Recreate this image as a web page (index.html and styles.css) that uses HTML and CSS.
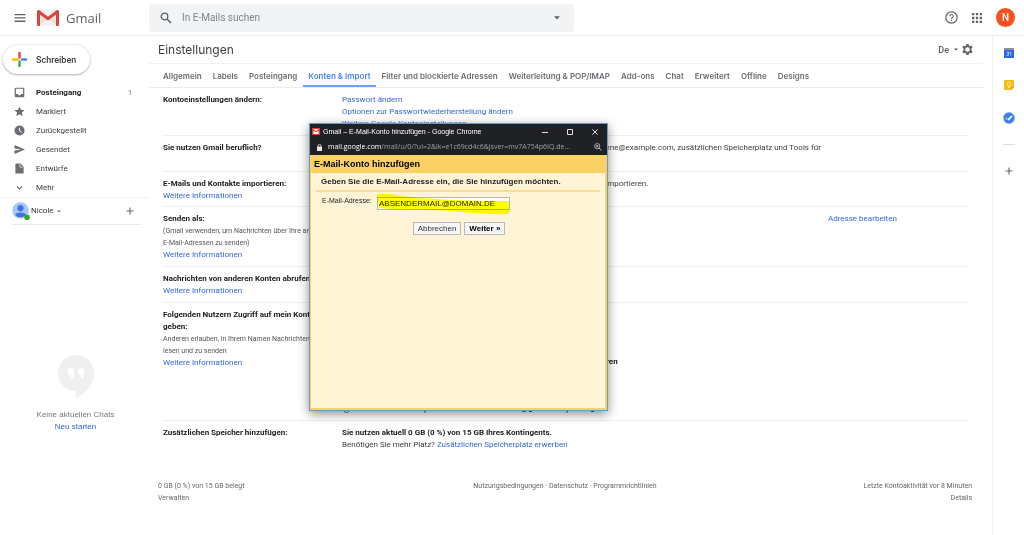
FILE: index.html
```html
<!DOCTYPE html>
<html lang="de">
<head>
<meta charset="utf-8">
<title>Gmail – Einstellungen</title>
<link rel="stylesheet" href="styles.css">
</head>
<body>
<header class="topbar">
  <div class="brand">
    <button class="icon-btn" aria-label="Hauptmenü"><svg width="12" height="12" viewBox="0 0 12 12"><path d="M0.5 2h11v1.3h-11zM0.5 5.3h11v1.3h-11zM0.5 8.6h11v1.3h-11z" fill="#5f6368"/></svg></button>
    <svg class="logo" width="22" height="16" viewBox="0 0 22 16"><path d="M1.500 0h19A1.500 1.500 0 0 1 22 1.500V14.500A1.500 1.500 0 0 1 20.500 16H1.500A1.500 1.500 0 0 1 0 14.500V1.500Z" fill="#e3e3e3"/><path d="M2 16L11 8.500L20 16Z" fill="#f2f2f2"/><path d="M3 .5h16L11 7z" fill="#f5f5f5"/><path d="M0 1.600V14.500A1.500 1.500 0 0 0 1.500 16H3V4.500L11 10.400L19 4.500V16h1.500A1.500 1.500 0 0 0 22 14.500V1.600C22 .2 20.500-.4 19.400.4L11 6.800L2.600.4C1.500-.4 0 .2 0 1.600Z" fill="#d8453a"/></svg>
    <span class="brand-name">Gmail</span>
  </div>
  <form class="search">
    <button type="button" class="icon-btn" aria-label="Suchen"><svg width="12" height="12" viewBox="0 0 12 12"><circle cx="4.500" cy="4.500" r="3.300" fill="none" stroke="#5f6368" stroke-width="1.300"/><path d="M7 7l4 4" stroke="#5f6368" stroke-width="1.600"/></svg></button>
    <input type="text" aria-label="In E-Mails suchen" placeholder="In E-Mails suchen">
    <button type="button" class="icon-btn" aria-label="Suchoptionen"><svg width="6" height="4" viewBox="0 0 6 4"><path d="M0 .3h6L3 3.500z" fill="#5f6368"/></svg></button>
  </form>
  <div class="account">
    <button class="icon-btn" aria-label="Hilfe"><svg width="13" height="13" viewBox="0 0 24 24"><circle cx="12" cy="12" r="10.400" fill="none" stroke="#5f6368" stroke-width="2.200"/><path d="M8.800 9.800c0-4.300 6.400-4.300 6.400-.2 0 2.300-3.200 2.400-3.200 5" fill="none" stroke="#5f6368" stroke-width="2"/><path d="M11 16.300h2v2.200h-2z" fill="#5f6368"/></svg></button>
    <button class="icon-btn" aria-label="Apps"><svg width="10" height="10" viewBox="0 0 10 10" fill="#5f6368"><path d="M0 0h2.300v2.300H0zM3.850 0h2.300v2.300h-2.300zM7.700 0H10v2.300H7.700zM0 3.850h2.300v2.300H0zM3.850 3.850h2.300v2.300h-2.300zM7.700 3.850H10v2.300H7.700zM0 7.700h2.300V10H0zM3.850 7.700h2.300V10h-2.300zM7.700 7.700H10V10H7.700z"/></svg></button>
    <button class="avatar" aria-label="Google-Konto">N</button>
  </div>
</header>

<div class="layout">
  <aside class="sidebar">
    <button class="compose"><svg width="15" height="15" viewBox="0 0 15 15"><path d="M6.300 0h2.400v6.300H6.300z" fill="#ea4335"/><path d="M8.700 6.300H15v2.400H8.700z" fill="#4285f4"/><path d="M6.300 8.700h2.400V15H6.300z" fill="#34a853"/><path d="M0 6.300h8.700L6.300 8.700H0z" fill="#fbbc04"/></svg>Schreiben</button>
    <nav class="folders">
      <a href="#" class="folder current"><svg width="11" height="11" viewBox="0 0 24 24"><path d="M4 1.500h16A2.500 2.500 0 0 1 22.500 4v16a2.500 2.500 0 0 1-2.500 2.500H4A2.500 2.500 0 0 1 1.500 20V4A2.500 2.500 0 0 1 4 1.500zM4.200 4v11.500h4.300c.5 4 6.500 4 7 0h4.300V4z" fill="#6b6e72" fill-rule="evenodd"/></svg><span>Posteingang</span><span class="count">1</span></a>
      <a href="#" class="folder"><svg width="11" height="11" viewBox="0 0 24 24"><path d="M12 1l3.200 7.400 8 .7-6 5.300 1.800 7.900-7-4.200-7 4.200 1.800-7.900-6-5.300 8-.7z" fill="#6b6e72"/></svg><span>Markiert</span></a>
      <a href="#" class="folder"><svg width="11" height="11" viewBox="0 0 24 24"><circle cx="12" cy="12" r="11" fill="#6b6e72"/><path d="M12 6v7l5 3" fill="none" stroke="#fff" stroke-width="2"/></svg><span>Zurückgestellt</span></a>
      <a href="#" class="folder"><svg width="11" height="11" viewBox="0 0 24 24"><path d="M1 2l23 10L1 22v-8l15-2L1 10z" fill="#6b6e72"/></svg><span>Gesendet</span></a>
      <a href="#" class="folder"><svg width="11" height="11" viewBox="0 0 24 24"><path d="M5 1h9l7 7v13a2 2 0 0 1-2 2H5a2 2 0 0 1-2-2V3a2 2 0 0 1 2-2z" fill="#6b6e72"/><path d="M13 3v6h6" fill="none" stroke="#fff" stroke-width="1.500"/></svg><span>Entwürfe</span></a>
      <a href="#" class="folder"><svg width="11" height="11" viewBox="0 0 11 11"><path d="M2.800 4.300l2.700 2.700 2.700-2.700" fill="none" stroke="#6b6e72" stroke-width="1.100"/></svg><span>Mehr</span></a>
    </nav>
    <div class="chat-user">
      <svg width="18" height="18" viewBox="0 0 18 18"><circle cx="8.500" cy="8.500" r="8.200" fill="#a6c5fa"/><circle cx="8.500" cy="6.200" r="3.100" fill="#3f73e0"/><path d="M3 12.800c2-3.200 9-3.200 11 0-2.600 3.400-8.400 3.400-11 0z" fill="#3f73e0"/><circle cx="15" cy="15.200" r="2.800" fill="#2faa1f"/></svg>
      <span>Nicole</span>
      <svg width="4" height="3" viewBox="0 0 4 3"><path d="M0 .5h4L2 2.500z" fill="#777"/></svg>
      <button class="icon-btn" aria-label="Neue Unterhaltung"><svg width="8" height="8" viewBox="0 0 8 8"><path d="M4 .5v7M.5 4h7" stroke="#666" stroke-width="1.100"/></svg></button>
    </div>
    <div class="chats">
      <svg width="36" height="43" viewBox="0 0 36 43"><circle cx="18" cy="18" r="18" fill="#efefef"/><path d="M18 35v8c9-3.800 17.500-13 18-25z" fill="#efefef"/><path d="M10 13.500h6v6c0 2.300-1.200 3.800-3 4.500v-4.500h-3zM20 13.500h6v6c0 2.300-1.200 3.800-3 4.500v-4.500h-3z" fill="#fff"/></svg>
      <p>Keine aktuellen Chats</p>
      <a href="#">Neu starten</a>
    </div>
  </aside>

  <main class="main">
    <div class="page-head">
      <h1>Einstellungen</h1>
      <button class="lang">De<svg width="4" height="3" viewBox="0 0 4 3"><path d="M0 .5h4L2 2.500z" fill="#555"/></svg></button>
      <button class="icon-btn" aria-label="Einstellungen"><svg width="11" height="11" viewBox="0 0 24 24"><path fill="#666" fill-rule="evenodd" d="M9.500 0h5l.7 3.500 2.100 1.200 3.400-1.200 2.500 4.300-2.700 2.400v3.600l2.700 2.400-2.500 4.300-3.400-1.200-2.100 1.200-.7 3.500h-5l-.7-3.500-2.100-1.200-3.400 1.200L.8 16.200l2.700-2.400v-3.600L.8 7.800l2.500-4.300 3.400 1.200 2.100-1.200zM12 7a5 5 0 1 0 0 10 5 5 0 0 0 0-10z"/></svg></button>
    </div>
    <nav class="tabs">
      <a href="#">Allgemein</a><a href="#">Labels</a><a href="#">Posteingang</a><a href="#" class="active">Konten &amp; Import</a><a href="#">Filter und blockierte Adressen</a><a href="#">Weiterleitung &amp; POP/IMAP</a><a href="#">Add-ons</a><a href="#">Chat</a><a href="#">Erweitert</a><a href="#">Offline</a><a href="#">Designs</a>
    </nav>
    <div class="settings">
      <section class="row">
        <div><h2>Kontoeinstellungen ändern:</h2></div>
        <div class="value"><a href="#">Passwort ändern</a><a href="#">Optionen zur Passwortwiederherstellung ändern</a><a href="#">Weitere Google Kontoeinstellungen</a></div>
      </section>
      <section class="row">
        <div><h2>Sie nutzen Gmail beruflich?</h2></div>
        <div class="value"><p>Unternehmen erhalten durch G Suite professionelle E-Mail-Adressen wie name@example.com, zusätzlichen Speicherplatz und Tools für<br>die Verwaltung.</p></div>
      </section>
      <section class="row import">
        <div><h2>E-Mails und Kontakte importieren:</h2><a href="#">Weitere Informationen</a></div>
        <div class="value"><p>Aus Yahoo!, Hotmail, AOL oder auch anderen Webmail- oder POP3-Konten importieren.</p></div>
      </section>
      <section class="row">
        <div><h2>Senden als:</h2><small>(Gmail verwenden, um Nachrichten über Ihre anderen<br>E-Mail-Adressen zu senden)</small><a href="#">Weitere Informationen</a></div>
        <div class="value"></div>
        <div class="action"><a href="#">Adresse bearbeiten</a></div>
      </section>
      <section class="row">
        <div><h2>Nachrichten von anderen Konten abrufen:</h2><a href="#">Weitere Informationen</a></div>
        <div class="value"></div>
      </section>
      <section class="row access">
        <div><h2>Folgenden Nutzern Zugriff auf mein Konto geben:</h2><small>Anderen erlauben, in Ihrem Namen Nachrichten zu<br>lesen und zu senden</small><a href="#">Weitere Informationen</a></div>
        <div class="value options">
          <label><input type="radio" name="sender" checked><b>Diese Adresse und die Person, die sie gesendet hat, hier jeweils anführen</b></label>
          <label><input type="radio" name="sender"><b>Nur diese Adresse (nicole.mustermeister1234@gmail.com) anzeigen</b></label>
        </div>
      </section>
      <section class="row">
        <div><h2>Zusätzlichen Speicher hinzufügen:</h2></div>
        <div class="value"><b>Sie nutzen aktuell 0 GB (0 %) von 15 GB Ihres Kontingents.</b><p>Benötigen Sie mehr Platz? <a href="#">Zusätzlichen Speicherplatz erwerben</a></p></div>
      </section>
    </div>
    <footer class="footer">
      <div>0 GB (0 %) von 15 GB belegt<br><a href="#">Verwalten</a></div>
      <div><a href="#">Nutzungsbedingungen</a> · <a href="#">Datenschutz</a> · <a href="#">Programmrichtlinien</a></div>
      <div>Letzte Kontoaktivität vor 8 Minuten<br><a href="#">Details</a></div>
    </footer>
  </main>

  <aside class="addons">
    <button class="icon-btn" aria-label="Kalender"><svg width="10" height="10" viewBox="0 0 10 10"><path d="M0 0h10v2.500H0z" fill="#8a9099"/><path d="M0 2h10v8H0z" fill="#2a66e8"/><path d="M2.500 4h2v3.500h-2M3 5.700h1.500M5.800 4.500l1-.5v3.700" stroke="#c4dafc" stroke-width=".7" fill="none"/></svg></button>
    <button class="icon-btn" aria-label="Notizen"><svg width="10" height="10" viewBox="0 0 10 10"><path d="M1 0h8a1 1 0 0 1 1 1v6L7 10H1a1 1 0 0 1-1-1V1a1 1 0 0 1 1-1z" fill="#f7ba17"/><path d="M7 10V7h3z" fill="#e59b00"/><circle cx="5" cy="4.300" r="1.800" fill="none" stroke="#fff1bd" stroke-width=".8"/><path d="M4 7.300h2" stroke="#fff1bd"/></svg></button>
    <button class="icon-btn" aria-label="Aufgaben"><svg width="12" height="12" viewBox="0 0 12 12"><circle cx="6" cy="6" r="5.700" fill="#3d7ff0"/><path d="M5 8.200l4-4.200" stroke="#fff" stroke-width="1.700"/><circle cx="3.300" cy="6.700" r="1.100" fill="#fbbc04"/></svg></button>
    <hr>
    <button class="icon-btn" aria-label="Add-ons aufrufen"><svg width="8" height="8" viewBox="0 0 8 8"><path d="M4 .5v7M.5 4h7" stroke="#666" stroke-width="1.100"/></svg></button>
  </aside>
</div>

<div class="popup" role="dialog" aria-label="E-Mail-Konto hinzufügen">
  <div class="titlebar">
    <svg width="8" height="7" viewBox="0 0 8 7"><path d="M0 0h8v7H0z" fill="#e23b34"/><path d="M1.500 1L4 3.200 6.500 1zM1.500 6V2.500L4 4.500l2.500-2V6z" fill="#fff"/></svg>
    <span>Gmail – E-Mail-Konto hinzufügen - Google Chrome</span>
    <button class="icon-btn" aria-label="Minimieren"><svg width="6" height="6" viewBox="0 0 6 6"><path d="M0 3.500h6" stroke="#ddd"/></svg></button>
    <button class="icon-btn" aria-label="Maximieren"><svg width="6" height="6" viewBox="0 0 6 6"><path d="M.5.5h5v5h-5z" fill="none" stroke="#ddd"/></svg></button>
    <button class="icon-btn" aria-label="Schließen"><svg width="6" height="6" viewBox="0 0 6 6"><path d="M.3.3l5.400 5.400M5.700.3L.3 5.700" stroke="#ddd"/></svg></button>
  </div>
  <div class="urlbar">
    <svg width="5" height="7" viewBox="0 0 5 7"><path d="M0 2.500h5V7H0z" fill="#e8e8e8"/><path d="M1 3V1.800a1.500 1.500 0 0 1 3 0V3" fill="none" stroke="#e8e8e8" stroke-width=".8"/></svg>
    <span class="url"><b>mail.google.com</b>/mail/u/0/?ui=2&amp;ik=e1c69cd4c6&amp;jsver=mv7A754p6IQ.de...</span>
    <svg width="8" height="8" viewBox="0 0 8 8"><circle cx="3.200" cy="3.200" r="2.600" fill="none" stroke="#ccc" stroke-width=".8"/><path d="M5 5l2.600 2.600M2 3.200h2.400M3.200 2v2.400" stroke="#ccc" stroke-width=".9"/></svg>
  </div>
  <form class="dialog">
    <h2>E-Mail-Konto hinzufügen</h2>
    <div class="dialog-body">
      <h3>Geben Sie die E-Mail-Adresse ein, die Sie hinzufügen möchten.</h3>
      <div class="field">
        <label for="mail">E-Mail-Adresse:</label>
        <span class="marked"><input id="mail" type="text" value="ABSENDERMAIL@DOMAIN.DE"><svg class="marker" viewBox="0 0 134 22" preserveAspectRatio="none"><path d="M1 1C14 0 29 4 43 5c27 2 54 3 81 3l9 0v13c-25 1-50-3-77-4-18-1-36 0-53-2z" fill="#ffff00"/></svg></span>
      </div>
      <div class="buttons"><button type="button">Abbrechen</button><button type="button"><b>Weiter »</b></button></div>
    </div>
  </form>
</div>
</body>
</html>
```
FILE: styles.css
```css
* { box-sizing: border-box; }
body {
  margin: 0;
  min-height: 100vh;
  display: flex;
  flex-direction: column;
  font: 8px/12px Roboto, "Liberation Sans", sans-serif;
  color: #3c4043;
  background: #fff;
}
h1, h2, h3, p { margin: 0; font-size: inherit; }
a { color: #3367d6; text-decoration: none; }
button, input { font: inherit; color: inherit; }
svg { flex: none; display: block; }
.icon-btn { border: 0; padding: 0; background: none; display: flex; align-items: center; }

.topbar {
  height: 36px;
  display: flex;
  align-items: center;
  border-bottom: 1px solid #eeeff0;
}
.brand { width: 149px; flex: none; display: flex; align-items: center; padding-left: 14px; }
.logo { margin: 0 7px 0 11px; }
.brand-name { font: 13px/20px "Open Sans", sans-serif; color: #5f6368; }
.search {
  flex: 0 1 425px;
  height: 28px;
  display: flex;
  align-items: center;
  padding: 0 14px 0 11px;
  border-radius: 4px;
  background: #f1f3f4;
}
.search input {
  flex: 1;
  min-width: 0;
  margin-left: 10px;
  padding: 0;
  border: 0;
  background: none;
  font: 10px/16px Roboto, sans-serif;
}
.search input::placeholder { color: #80868b; }
.account { margin-left: auto; display: flex; align-items: center; gap: 14px; padding-right: 9px; }
.avatar {
  width: 19px;
  height: 19px;
  padding: 0;
  border: 0;
  border-radius: 50%;
  background: #f4511e;
  color: #fff;
  font-size: 10px;
  font-weight: 500;
}

.layout { flex: 1; display: flex; }
.sidebar { width: 149px; flex: none; padding-top: 9px; }
.compose {
  height: 29px;
  display: flex;
  align-items: center;
  gap: 9px;
  margin-left: 3px;
  padding: 0 14px 0 9px;
  border: 0;
  border-radius: 15px;
  background: #fff;
  box-shadow: 0 1px 2px rgba(60, 64, 67, .35), 0 0 2px rgba(60, 64, 67, .2);
  font: 500 9px/12px Roboto, sans-serif;
}
.folders { padding-top: 9px; border-bottom: 1px solid #f1f1f1; }
.folder {
  height: 19px;
  display: flex;
  align-items: center;
  gap: 11px;
  padding: 0 17px 0 14px;
  color: #3c4043;
}
.folder.current { font-weight: 700; color: #202124; }
.count { margin-left: auto; font-size: 7px; font-weight: 400; color: #5f6368; }
.chat-user {
  height: 27px;
  display: flex;
  align-items: center;
  gap: 3px;
  margin: 0 8px 0 12px;
  padding-right: 7px;
  border-bottom: 1px solid #e8e8e8;
}
.chat-user span { margin-left: -2px; }
.chat-user button { margin-left: auto; }
.chats {
  display: flex;
  flex-direction: column;
  align-items: center;
  margin-top: 130px;
  padding-left: 2px;
  font-family: "Liberation Sans", sans-serif;
  color: #777;
}
.chats p { margin-top: 11px; }

.main { flex: 1; min-width: 0; }
.page-head {
  height: 28px;
  display: flex;
  align-items: center;
  margin-right: 9px;
  padding: 0 10px 0 9px;
  border-bottom: 1px solid #f1f1f1;
}
.page-head h1 { flex: 1; font: 12px/16px Inter, sans-serif; color: #3c4043; }
.lang {
  display: flex;
  align-items: center;
  gap: 5px;
  margin-right: 4px;
  padding: 0;
  border: 0;
  background: none;
  font-size: 9px;
  font-weight: 500;
  color: #5f6368;
}
.tabs {
  height: 24px;
  display: flex;
  gap: 1px;
  margin-right: 9px;
  padding-left: 9px;
  border-bottom: 1px solid #ececec;
}
.tabs a {
  padding: 0 5px;
  border-bottom: 2px solid transparent;
  font: 600 8px/24px Inter, sans-serif;
  color: #6b6e72;
  white-space: nowrap;
}
.tabs .active { color: #4285f4; border-color: #6ba1f8; }

.settings { padding: 0 24px 0 14px; }
.row {
  display: grid;
  grid-template-columns: 164px 471px 1fr;
  column-gap: 15px;
  padding: 6px 0 5px;
  border-bottom: 1px solid #efefef;
}
.row:last-child { border: 0; }
.row h2, .row b { font-weight: 700; color: #202124; }
.row small { display: block; font-size: 7px; color: #555; white-space: nowrap; }
.row > div > a, .value > b { display: block; }
.import { padding-bottom: 4px; }
.access { min-height: 118px; }
.value { white-space: nowrap; }
.options { display: flex; flex-direction: column; justify-content: flex-end; gap: 35px; }
.options label { display: flex; align-items: center; gap: 5px; }
.options input { width: 7px; height: 7px; margin: 0 0 0 1px; }

.footer {
  display: grid;
  grid-template-columns: 1fr auto 1fr;
  padding: 24px 20px 10px 9px;
  font-size: 7px;
  color: #666;
}
.footer a { color: inherit; }
.footer div:last-child { text-align: right; }

.addons {
  width: 32px;
  flex: none;
  display: flex;
  flex-direction: column;
  align-items: center;
  gap: 22px;
  padding: 12px 0 0 1px;
  border-left: 1px solid #f1f1f1;
}
.addons hr { width: 12px; margin: -2px 0 0; border: 0; border-top: 1px solid #ddd; }

.popup {
  position: absolute;
  left: 309px;
  top: 123px;
  width: 299px;
  height: 288px;
  display: flex;
  flex-direction: column;
  border: 1px solid #6a9cc0;
  background: #202124;
  box-shadow: 0 3px 10px rgba(0, 0, 0, .45);
}
.titlebar {
  height: 15px;
  display: flex;
  align-items: center;
  gap: 19px;
  padding: 0 9px 0 2px;
  font: 7px/12px "Liberation Sans", sans-serif;
  color: #fff;
}
.titlebar span { flex: 1; margin-left: -16px; }
.urlbar {
  height: 16px;
  display: flex;
  align-items: center;
  gap: 6px;
  padding: 0 5px 0 7px;
  font: 7px/12px "Open Sans", sans-serif;
  color: #9aa0a6;
}
.url { flex: 1; white-space: nowrap; }
.url b { font-weight: 400; color: #fff; }
.dialog {
  flex: 1;
  display: flex;
  flex-direction: column;
  border: 1px solid #fad163;
  border-width: 0 2px 2px 1px;
  background: #fad163;
  font-family: "Liberation Sans", sans-serif;
  color: #222;
}
.dialog h2 { padding-left: 3px; font-size: 9px; line-height: 18px; color: #000; }
.dialog-body { flex: 1; padding: 3px 5px; background: #fff5d6; }
.dialog h3 { padding: 0 5px 2px; border-bottom: 2px solid #fbdf8c; font-size: 8px; }
.field { display: flex; padding: 3px 0 0 6px; }
.field label { width: 55px; font-size: 7px; white-space: nowrap; }
.marked { position: relative; display: flex; margin-top: 2px; }
.marked input {
  width: 133px;
  height: 13px;
  padding: 0 1px;
  border: 1px solid #b5b5b5;
  background: #fff;
}
.marker { position: absolute; left: -1px; top: -4px; width: 134px; height: 22px; mix-blend-mode: multiply; pointer-events: none; }
.buttons { display: flex; justify-content: center; gap: 3px; margin-top: 12px; padding-left: 2px; }
.buttons button {
  height: 13px;
  padding: 0 4px;
  border: 1px solid #b9b9b9;
  background: #f6f6f6;
  color: #333;
}
.buttons b { color: #000; }
```
